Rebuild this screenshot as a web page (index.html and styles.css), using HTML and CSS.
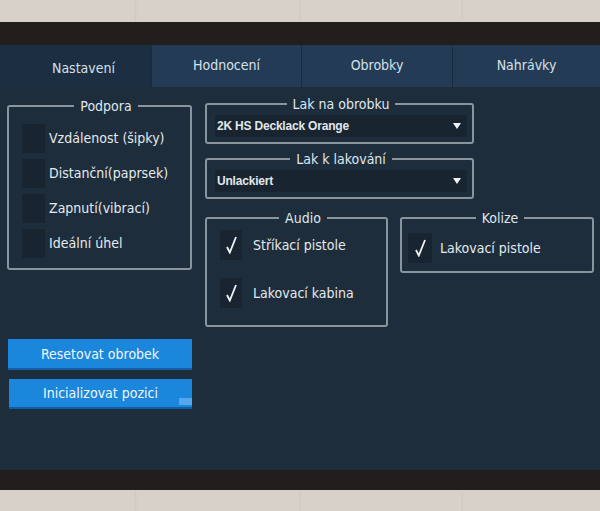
FILE: index.html
```html
<!DOCTYPE html>
<html lang="cs">
<head>
    <meta charset="UTF-8">
    <meta name="viewport" content="width=device-width, initial-scale=1.0">
    <title>Nastavení</title>
    <link rel="stylesheet" href="styles.css">
</head>
<body>
    <div class="bezel">
      <div class="screen">
        <div class="tabs">
          <div class="tab active">Nastavení</div>
          <div class="tab">Hodnocení</div>
          <div class="tab">Obrobky</div>
          <div class="tab">Nahrávky</div>
        </div>

        <div class="page">
          <div class="left">
            <fieldset class="group podpora">
              <legend>Podpora</legend>
              <div class="opt"><span class="box"></span>Vzdálenost (šipky)</div>
              <div class="opt"><span class="box"></span>Distanční(paprsek)</div>
              <div class="opt"><span class="box"></span>Zapnutí(vibrací)</div>
              <div class="opt"><span class="box"></span>Ideální úhel</div>
            </fieldset>

            <div class="buttons">
              <button class="btn">Resetovat obrobek</button>
              <button class="btn init">Inicializovat pozici<span class="corner"></span></button>
            </div>
          </div>

          <div class="right">
            <fieldset class="group lak">
              <legend>Lak na obrobku</legend>
              <div class="select"><span>2K HS Decklack Orange</span><span class="arrow"></span></div>
            </fieldset>

            <fieldset class="group lak">
              <legend>Lak k lakování</legend>
              <div class="select"><span>Unlackiert</span><span class="arrow"></span></div>
            </fieldset>

            <div class="row">
              <fieldset class="group audio">
                <legend>Audio</legend>
                <div class="opt">
                  <span class="box"><svg width="11" height="18" viewBox="0 0 11 18"><polyline points="1,11 3.8,16.5 10,1" fill="none" stroke="#f2f5f7" stroke-width="1.8"/></svg></span>
                  Stříkací pistole
                </div>
                <div class="opt">
                  <span class="box"><svg width="11" height="18" viewBox="0 0 11 18"><polyline points="1,11 3.8,16.5 10,1" fill="none" stroke="#f2f5f7" stroke-width="1.8"/></svg></span>
                  Lakovací kabina
                </div>
              </fieldset>

              <fieldset class="group kolize">
                <legend>Kolize</legend>
                <div class="opt">
                  <span class="box"><svg width="11" height="18" viewBox="0 0 11 18"><polyline points="1,11 3.8,16.5 10,1" fill="none" stroke="#f2f5f7" stroke-width="1.8"/></svg></span>
                  Lakovací pistole
                </div>
              </fieldset>
            </div>
          </div>
        </div>
      </div>
    </div>
</body>
</html>
```

FILE: styles.css
```css
body {
  margin: 0;
  height: 511px;
  overflow: hidden;
  font-family: "DejaVu Sans Condensed", "DejaVu Sans", sans-serif;
  font-size: 14px;
  color: #e4eaee;
  background-color: #d8d1ca;
  background-image:
    linear-gradient(90deg, transparent 134px, #cfc8c0 135px, transparent 137px,
      transparent 299px, #d0c9c1 300px, transparent 302px,
      transparent 461px, #d1cac2 462px, transparent 464px);
}

.bezel {
  margin-top: 22px;
  padding: 23px 0 20px;
  background: #211e1d;
}

.screen {
  height: 425px;
  background: #1e2d3b;
}

/* tab bar */
.tabs {
  display: grid;
  grid-template-columns: 151px 150px 151px 148px;
  height: 42px;
}

.tab {
  display: flex;
  align-items: center;
  justify-content: center;
  padding-bottom: 2px;
  background: #233b55;
  border-left: 1px solid #1c2b3b;
  color: #d6e0e8;
  font-size: 14px;
}

.tab.active {
  background: #1b2e42;
  border-left: none;
  padding: 4px 0 0 16px;
}

/* content */
.page {
  display: flex;
  gap: 13px;
  padding: 9px 0 0 7px;
}

.left {
  width: 185px;
  padding-top: 2px;
}

.right {
  display: flex;
  flex-direction: column;
  gap: 7px;
  width: 389px;
}

.group {
  margin: 0;
  min-width: 0;
  border: 2px solid #8a949d;
  border-radius: 3px;
}

.group legend {
  margin: 0 auto;
  padding: 0 6px;
  line-height: 16px;
  color: #dfe8ef;
}

.opt {
  display: flex;
  align-items: center;
  height: 30px;
}

.box {
  display: flex;
  align-items: center;
  justify-content: center;
  flex: none;
  background: #18242f;
}

.podpora {
  padding: 9px 0 10px 13px;
}

.podpora .opt + .opt {
  margin-top: 5px;
}

.podpora .box {
  width: 23px;
  height: 29px;
  margin-right: 4px;
}

/* dropdown boxes */
.lak {
  width: 269px;
  box-sizing: border-box;
  padding: 3px 5px 5px 8px;
}

.select {
  display: flex;
  align-items: center;
  justify-content: space-between;
  height: 22px;
  padding: 0 6px 0 2px;
  background: #18242f;
  font-family: "Liberation Sans", sans-serif;
  font-weight: bold;
  font-size: 12px;
  letter-spacing: -0.2px;
  color: #e2e7eb;
}

.arrow {
  width: 0;
  height: 0;
  border-left: 4px solid transparent;
  border-right: 4px solid transparent;
  border-top: 6px solid #f0f3f5;
}

.row {
  display: flex;
  gap: 12px;
  align-items: flex-start;
  margin-top: 4px;
}

.audio {
  width: 183px;
  box-sizing: border-box;
  padding: 4px 0 17px 13px;
}

.audio .opt + .opt {
  margin-top: 18px;
}

.audio .box {
  width: 22px;
  height: 30px;
  margin-right: 11px;
}

.kolize {
  width: 194px;
  box-sizing: border-box;
  padding: 7px 0 8px 6px;
}

.kolize .box {
  width: 24px;
  height: 30px;
  margin-right: 8px;
}

/* buttons */
.buttons {
  display: flex;
  flex-direction: column;
  gap: 9px;
  margin-top: 69px;
}

.btn {
  position: relative;
  width: 184px;
  height: 31px;
  margin-left: 1px;
  padding: 0;
  border: none;
  border-bottom: 2px solid #115ea6;
  background: #1a86dc;
  color: #f2f6fa;
  font-family: "DejaVu Sans Condensed", "DejaVu Sans", sans-serif;
  font-size: 14px;
}

.btn.init {
  width: 183px;
  height: 30px;
  margin-left: 2px;
}

.corner {
  position: absolute;
  right: 0;
  bottom: 2px;
  width: 13px;
  height: 7px;
  background: #55a6ec;
}
```
